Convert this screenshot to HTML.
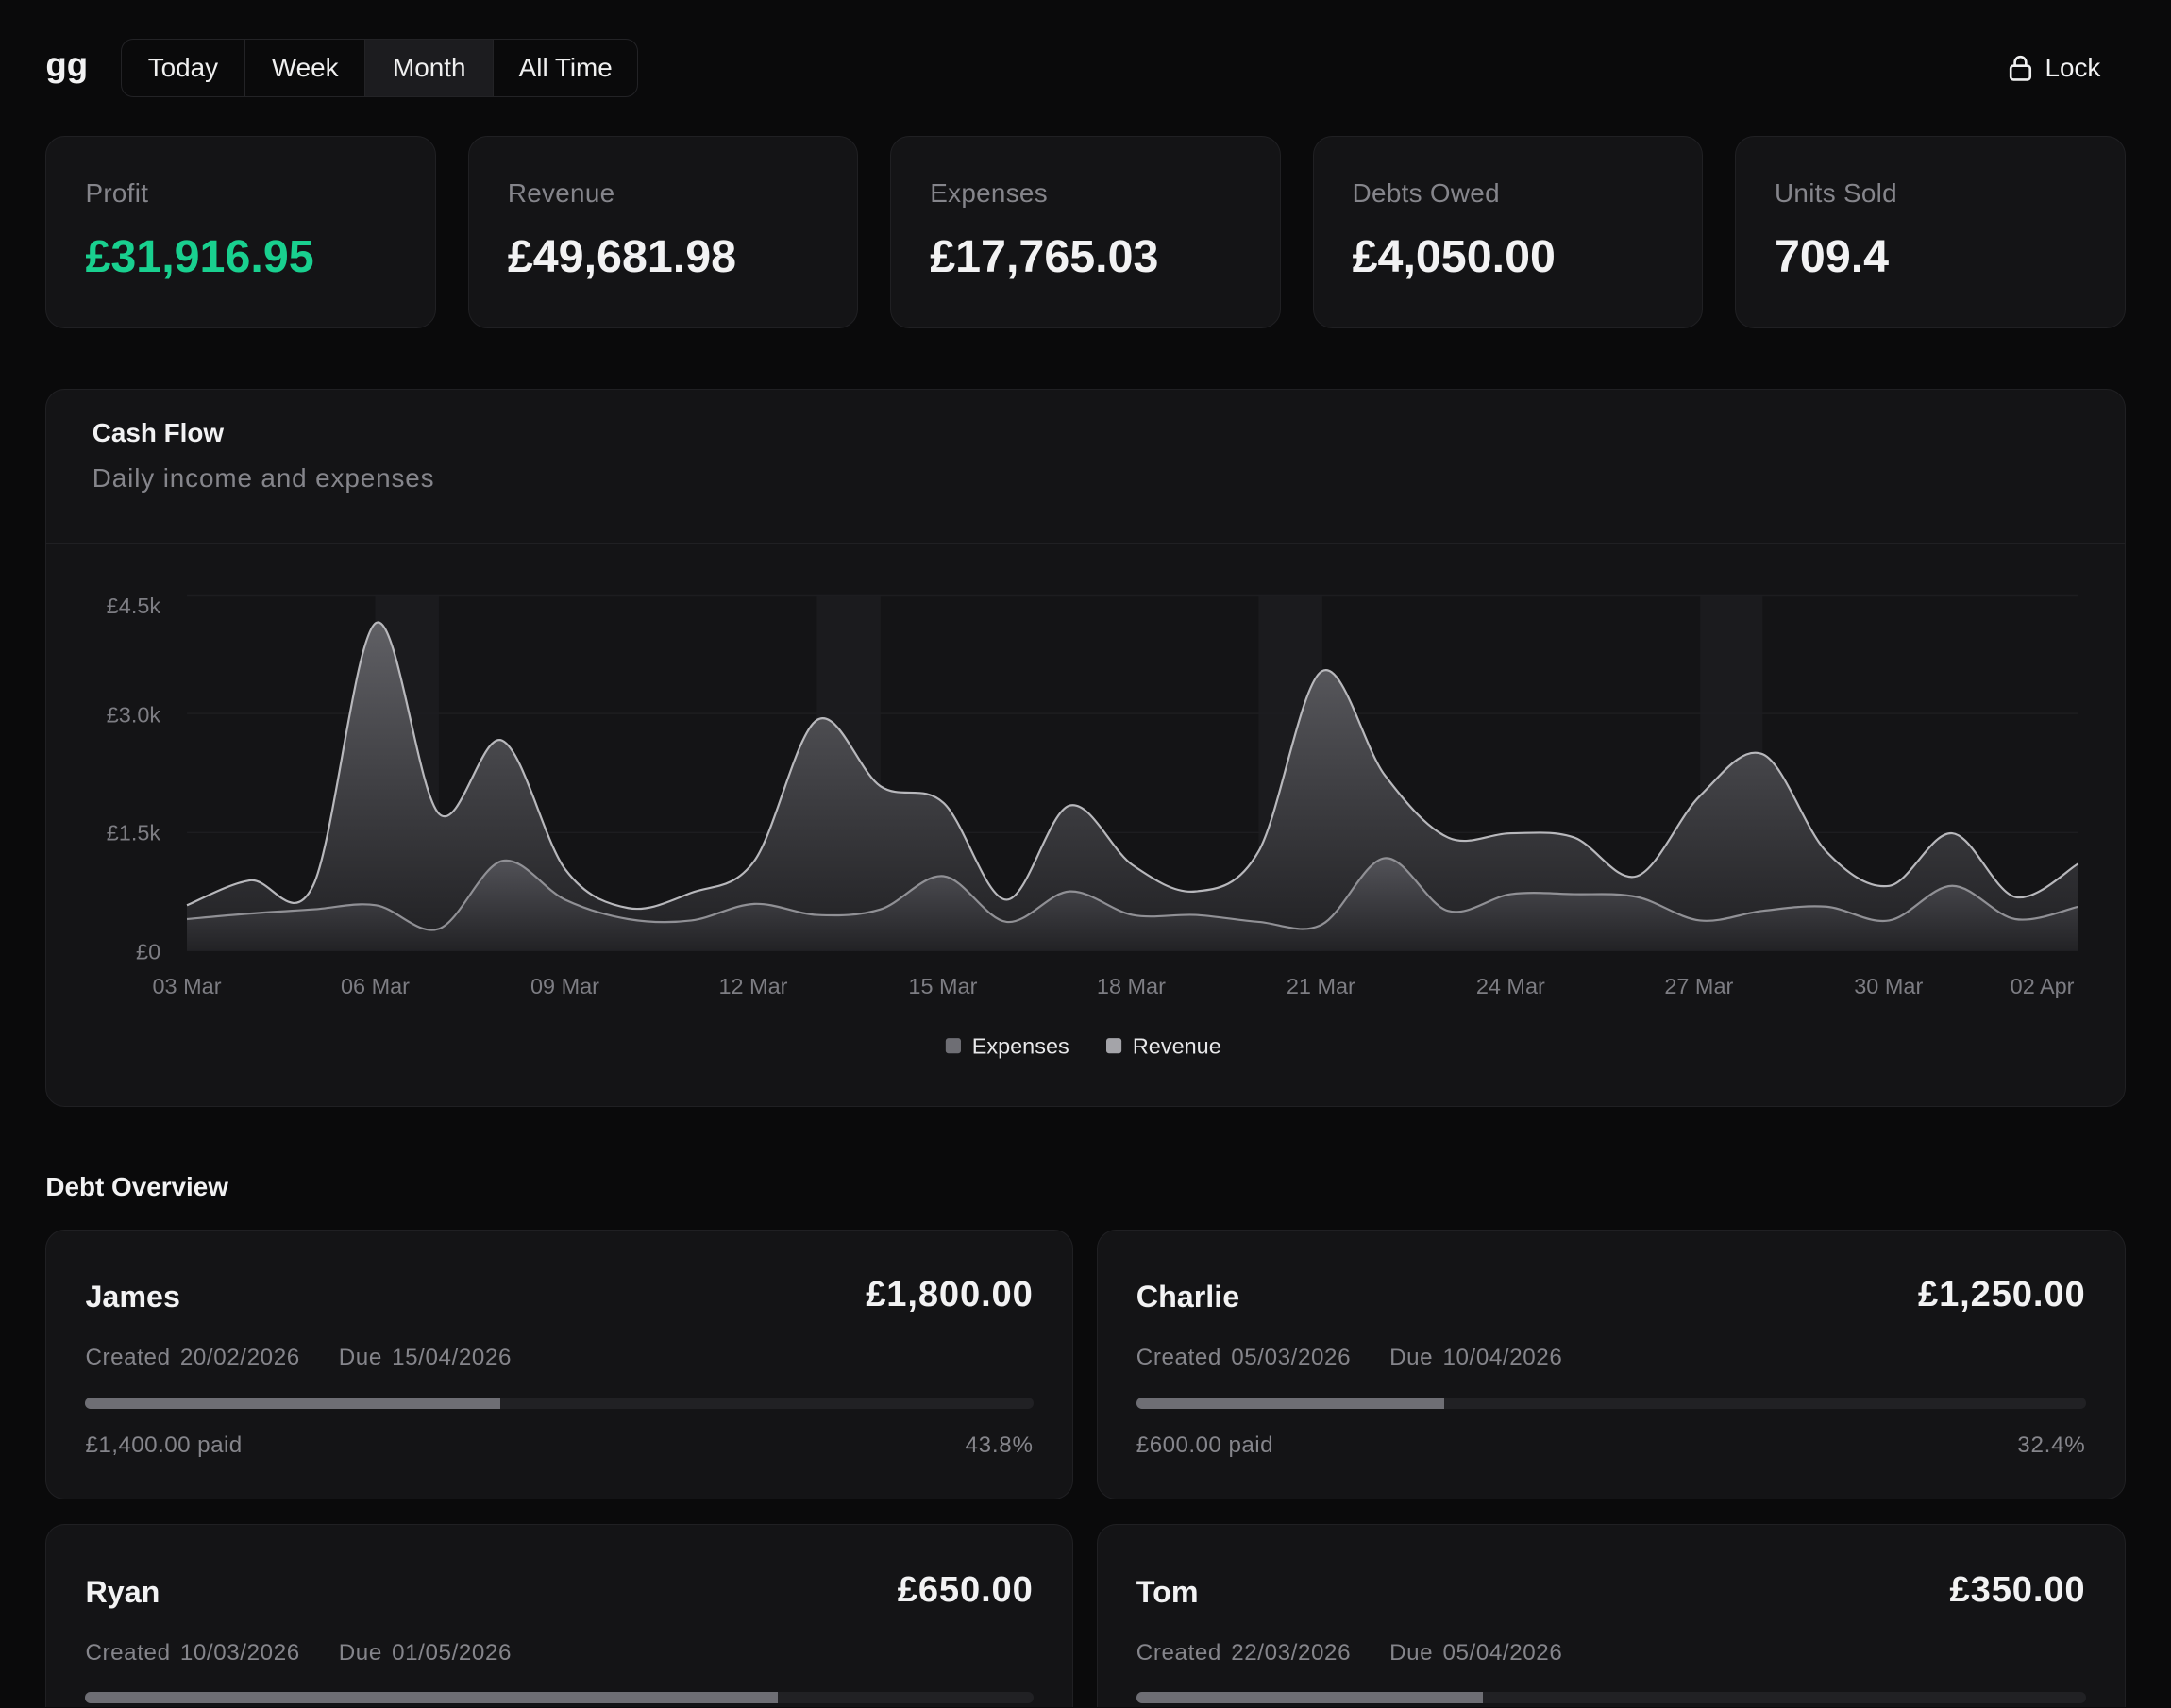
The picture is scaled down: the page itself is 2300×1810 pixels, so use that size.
<!DOCTYPE html>
<html><head><meta charset="utf-8">
<style>
html,body{margin:0;padding:0;background:#0a0a0b;overflow:hidden}
html{height:1810px}
body{width:1568px;height:1233px;zoom:1.46684;position:relative;font-family:"Liberation Sans",sans-serif;color:#f2f2f3}
.abs{position:absolute}
.card{position:absolute;background:#141416;border:1px solid #202023;border-radius:14px;box-sizing:border-box}
.cut{height:132px;border-bottom:none;border-bottom-left-radius:0;border-bottom-right-radius:0;overflow:hidden}
.seg{position:absolute;left:87px;top:28px;width:374px;height:42px;border:1px solid #232326;border-radius:9px;box-sizing:border-box;display:flex;overflow:hidden;font-size:19px}
.seg div{display:flex;align-items:center;justify-content:center;border-right:1px solid #232326;color:#f0f0f0}
.seg div:last-child{border-right:none}
.lbl{position:absolute;left:28px;top:30px;font-size:19px;color:#85858b;letter-spacing:0.2px}
.val{position:absolute;left:28px;top:68px;font-size:33px;font-weight:bold;letter-spacing:0px}
.dname{position:absolute;left:28px;top:36px;font-size:22px;font-weight:bold}
.damt{position:absolute;right:28px;top:32px;font-size:26px;font-weight:bold;letter-spacing:0.6px}
.ddate{position:absolute;left:28px;top:83px;font-size:16.5px;color:#85858b;letter-spacing:0.4px;word-spacing:2px}
.track{position:absolute;left:28px;right:28px;top:121px;height:8px;background:#212124;border-radius:4px;overflow:hidden}
.fill{height:100%;background:#6e6e74}
.dpaid{position:absolute;left:28px;top:146px;font-size:16.5px;color:#85858b;letter-spacing:0.3px}
.dpct{position:absolute;right:28px;top:146px;font-size:16.5px;color:#85858b;letter-spacing:0.5px}
</style></head><body>
<div class="abs" style="left:33px;top:33px;font-size:25px;font-weight:bold">gg</div>
<div class="seg">
<div style="width:89px">Today</div>
<div style="width:86px">Week</div>
<div style="width:92px;background:#1c1c1f">Month</div>
<div style="flex:1">All Time</div>
</div>
<div class="abs" style="left:1451px;top:38px;font-size:19px;display:flex;align-items:center;gap:9px">
<svg width="17" height="19" viewBox="0 0 17 19" fill="none" stroke="#f0f0f0" stroke-width="1.8"><rect x="1.5" y="8" width="14" height="10" rx="2"/><path d="M4.5 8V5.5a4 4 0 0 1 8 0V8"/></svg>Lock</div>

<div class="card" style="left:33px;top:98px;width:282px;height:139px"><div class="lbl">Profit</div><div class="val" style="color:#19d08f">£31,916.95</div></div>
<div class="card" style="left:338px;top:98px;width:282px;height:139px"><div class="lbl">Revenue</div><div class="val">£49,681.98</div></div>
<div class="card" style="left:643px;top:98px;width:282px;height:139px"><div class="lbl">Expenses</div><div class="val">£17,765.03</div></div>
<div class="card" style="left:948px;top:98px;width:282px;height:139px"><div class="lbl">Debts Owed</div><div class="val">£4,050.00</div></div>
<div class="card" style="left:1253px;top:98px;width:282px;height:139px"><div class="lbl">Units Sold</div><div class="val">709.4</div></div>

<div class="card" style="left:33px;top:281px;width:1502px;height:519px">
<div class="abs" style="left:33px;top:20px;font-size:19px;font-weight:bold">Cash Flow</div>
<div class="abs" style="left:33px;top:53px;font-size:19px;color:#85858b;letter-spacing:0.6px">Daily income and expenses</div>
<div class="abs" style="left:0;right:0;top:110px;height:1px;background:#202023"></div>
</div>
<svg class="abs" style="left:0;top:0" width="1568" height="800" id="ch">
<defs>
<linearGradient id="g1" x1="0" y1="440" x2="0" y2="687" gradientUnits="userSpaceOnUse"><stop offset="0" stop-color="#626267"/><stop offset="1" stop-color="#1f1f22"/></linearGradient>
<linearGradient id="g2" x1="0" y1="610" x2="0" y2="687" gradientUnits="userSpaceOnUse"><stop offset="0" stop-color="#5a5a60"/><stop offset="1" stop-color="#222225"/></linearGradient>
</defs>
<g fill="#1b1b1e"><rect x="271" y="430" width="46" height="257"/><rect x="590" y="430" width="46" height="257"/><rect x="909" y="430" width="46" height="257"/><rect x="1228" y="430" width="45" height="257"/></g>
<g stroke="#1d1d20" stroke-width="1"><line x1="135" x2="1501" y1="430.5" y2="430.5"/><line x1="135" x2="1501" y1="515.5" y2="515.5"/><line x1="135" x2="1501" y1="601.5" y2="601.5"/></g>
<g fill="#7d7d83" font-size="16" text-anchor="end"><text x="116" y="443">£4.5k</text><text x="116" y="522">£3.0k</text><text x="116" y="607">£1.5k</text><text x="116" y="693">£0</text></g>
<path id="ra" fill="url(#g1)"/><path id="ea" fill="url(#g2)"/>
<path id="rl" fill="none" stroke="#b8b8bc" stroke-width="1.5"/><path id="el" fill="none" stroke="#909095" stroke-width="1.5"/>
<g fill="#7d7d83" font-size="16" text-anchor="middle"><text x="135" y="718">03 Mar</text><text x="271" y="718">06 Mar</text><text x="408" y="718">09 Mar</text><text x="544" y="718">12 Mar</text><text x="681" y="718">15 Mar</text><text x="817" y="718">18 Mar</text><text x="954" y="718">21 Mar</text><text x="1091" y="718">24 Mar</text><text x="1227" y="718">27 Mar</text><text x="1364" y="718">30 Mar</text><text x="1475" y="718">02 Apr</text></g>
<rect x="683" y="750" width="11" height="11" rx="2" fill="#6e6e74"/><text x="702" y="761" fill="#e8e8ea" font-size="16">Expenses</text>
<rect x="799" y="750" width="11" height="11" rx="2" fill="#a4a4a9"/><text x="818" y="761" fill="#e8e8ea" font-size="16">Revenue</text>
</svg>

<div class="abs" style="left:33px;top:847px;font-size:19px;font-weight:bold">Debt Overview</div>

<div class="card" style="left:33px;top:888px;width:742px;height:195px">
<div class="dname">James</div><div class="damt">£1,800.00</div>
<div class="ddate">Created 20/02/2026 &nbsp;&nbsp; Due 15/04/2026</div>
<div class="track"><div class="fill" style="width:43.8%"></div></div>
<div class="dpaid">£1,400.00 paid</div><div class="dpct">43.8%</div></div>
<div class="card" style="left:792px;top:888px;width:743px;height:195px">
<div class="dname">Charlie</div><div class="damt">£1,250.00</div>
<div class="ddate">Created 05/03/2026 &nbsp;&nbsp; Due 10/04/2026</div>
<div class="track"><div class="fill" style="width:32.4%"></div></div>
<div class="dpaid">£600.00 paid</div><div class="dpct">32.4%</div></div>
<div class="card cut" style="left:33px;top:1101px;width:742px">
<div class="dname">Ryan</div><div class="damt">£650.00</div>
<div class="ddate">Created 10/03/2026 &nbsp;&nbsp; Due 01/05/2026</div>
<div class="track"><div class="fill" style="width:73%"></div></div></div>
<div class="card cut" style="left:792px;top:1101px;width:743px">
<div class="dname">Tom</div><div class="damt">£350.00</div>
<div class="ddate">Created 22/03/2026 &nbsp;&nbsp; Due 05/04/2026</div>
<div class="track"><div class="fill" style="width:36.5%"></div></div></div>

<script>
var R=[654,636,640,450,588,535,628,656,645,622,520,568,580,650,582,625,644,615,485,560,605,602,605,633,575,545,615,640,602,648,624];
var E=[664,660,657,654,671,622,650,664,665,653,661,657,633,666,644,661,661,666,668,620,658,646,646,648,665,658,655,665,640,664,655];
function pts(a){return a.map(function(y,i){return [135+i*1366/30,y];});}
function path(a){var p=pts(a),d="M"+p[0][0]+","+p[0][1];for(var i=0;i<p.length-1;i++){var p0=p[i-1]||p[i],p1=p[i],p2=p[i+1],p3=p[i+2]||p2;var c1x=p1[0]+(p2[0]-p0[0])/6,c1y=p1[1]+(p2[1]-p0[1])/6,c2x=p2[0]-(p3[0]-p1[0])/6,c2y=p2[1]-(p3[1]-p1[1])/6;d+=" C"+c1x+","+c1y+" "+c2x+","+c2y+" "+p2[0]+","+p2[1];}return d;}
var r=path(R),e=path(E);
document.getElementById("rl").setAttribute("d",r);document.getElementById("el").setAttribute("d",e);
document.getElementById("ra").setAttribute("d",r+" L1501,687 L135,687 Z");document.getElementById("ea").setAttribute("d",e+" L1501,687 L135,687 Z");
</script>
</body></html>
